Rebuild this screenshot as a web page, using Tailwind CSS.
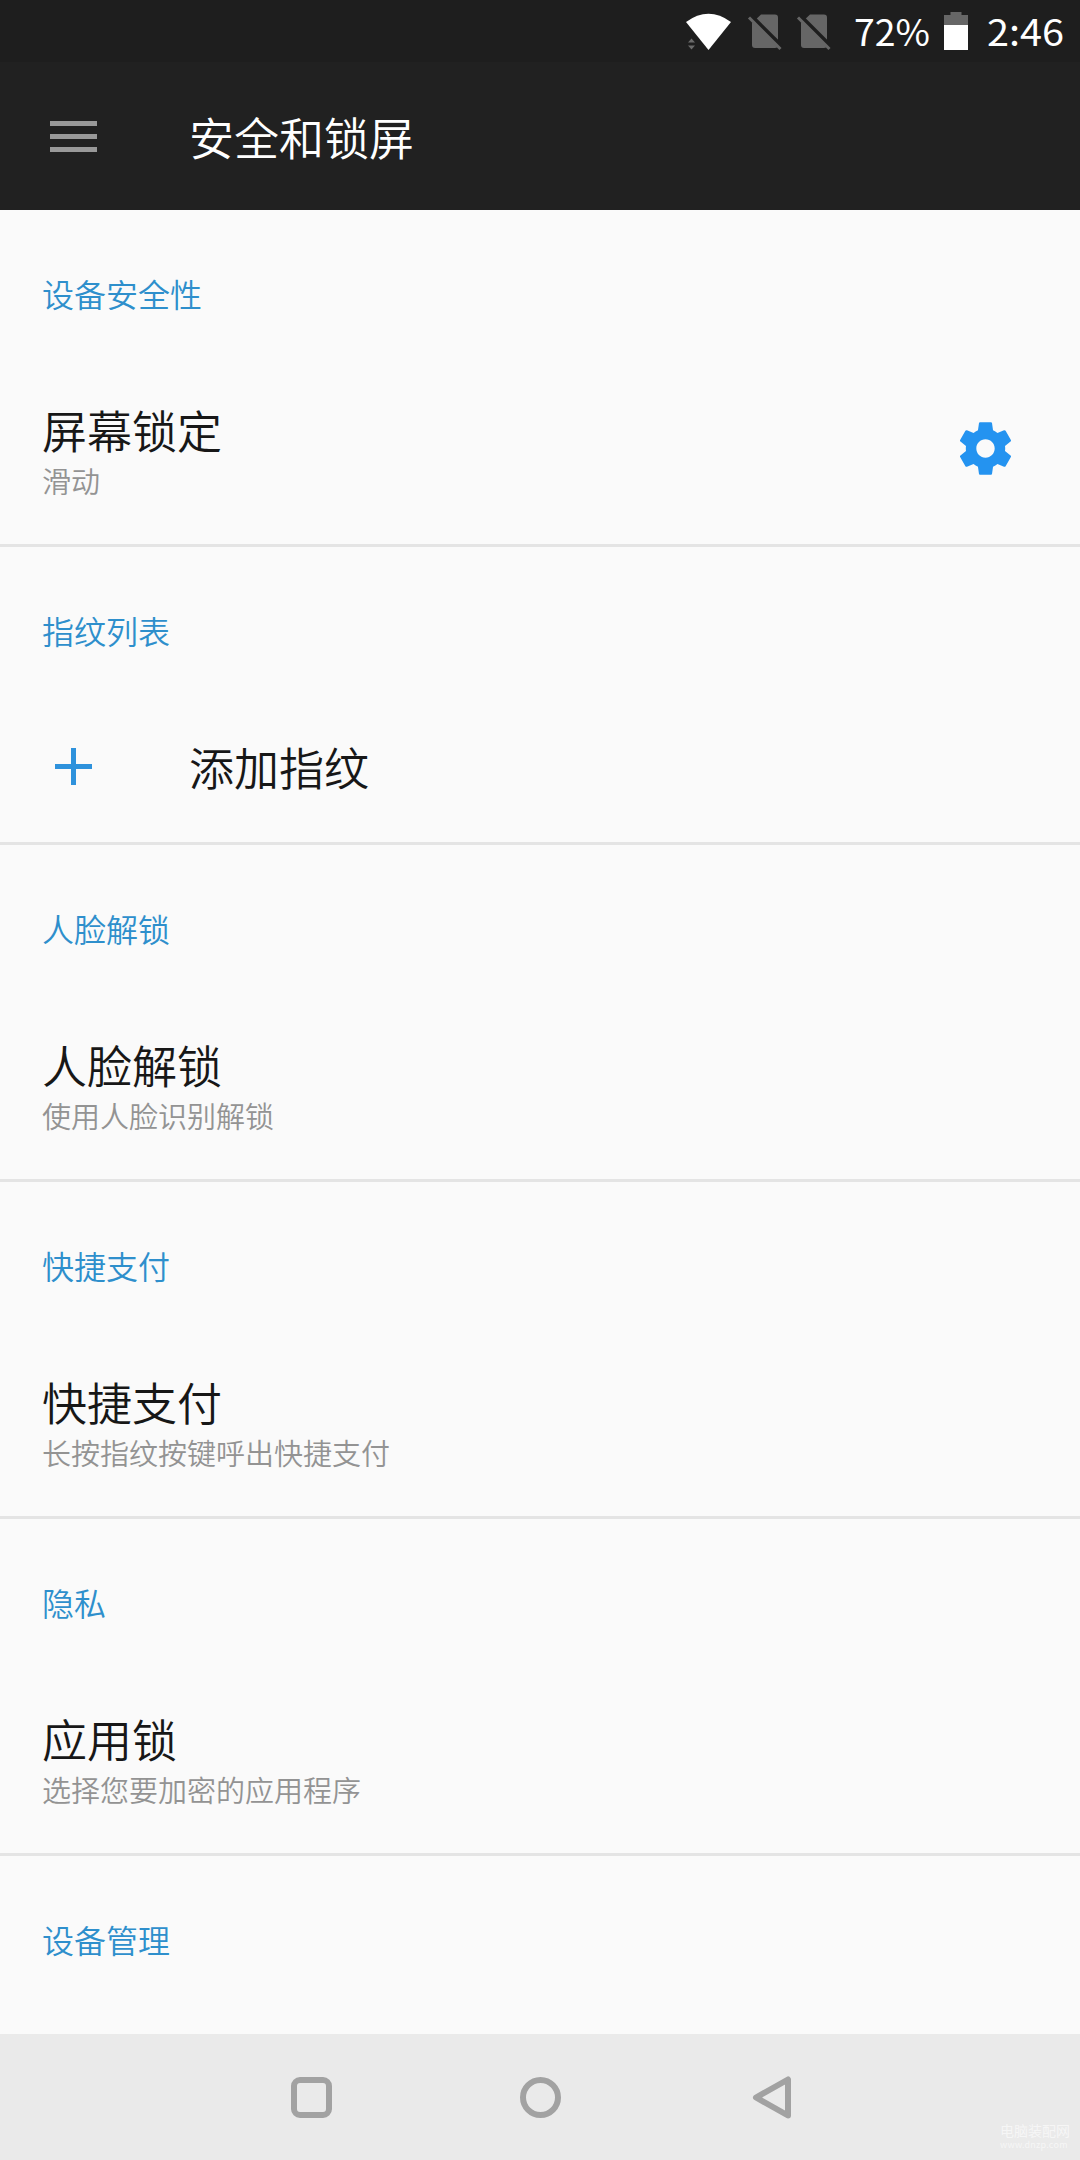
<!DOCTYPE html>
<html lang="zh-CN">
<head>
    <meta charset="UTF-8">
    <meta name="viewport" content="width=device-width, initial-scale=1.0">
    <title>安全和锁屏</title>
    <script src="https://cdn.jsdelivr.net/npm/@tailwindcss/browser@4"></script>
</head>
<body class="bg-[#fafafa] font-['Noto_Sans_CJK_SC',sans-serif] font-[350]">
<div class="w-[1080px] h-[2160px] flex flex-col overflow-hidden">

    <!-- Status bar -->
    <div class="h-[62px] shrink-0 bg-[#1e1e1e] flex items-center text-white font-normal text-[37px]">
        <svg class="w-[410px] h-[62px] ml-[670px] shrink-0" viewBox="670 0 410 62">
            <path d="M686 22Q708.500 5.500 731 22L708.500 50Z" fill="#fff"/>
            <path d="M688 42.500L691.500 38.500L695 42.500ZM688 45.500H695L691.500 49.500Z" fill="#6b6b6b"/>
            <g id="nosim">
                <path d="M752 23L761 14.500H775Q778 14.500 778 17.500V45Q778 48 775 48H755Q752 48 752 45Z" fill="#666"/>
                <path d="M751 15.500L782 46.500" stroke="#1e1e1e" stroke-width="4"/>
                <path d="M749 17.500L780.500 49" stroke="#666" stroke-width="3"/>
            </g>
            <use href="#nosim" x="49"/>
            <path d="M944 25V15H950.500V12H961.500V15H968V25Z" fill="#666"/>
            <path d="M944 25H968V50H944Z" fill="#fff"/>
            <text x="854" y="46" fill="#fff" textLength="76" lengthAdjust="spacingAndGlyphs">72%</text>
            <text x="987" y="46" fill="#fff" textLength="77" lengthAdjust="spacingAndGlyphs">2:46</text>
        </svg>
    </div>

    <!-- App bar -->
    <header class="h-[148px] shrink-0 bg-[#212121] flex items-center">
        <div class="ml-[50px] w-[47px] pt-px flex flex-col gap-2">
            <span class="h-[5px] bg-[#999]"></span>
            <span class="h-[5px] bg-[#999]"></span>
            <span class="h-[5px] bg-[#999]"></span>
        </div>
        <h1 class="ml-[92px] pt-px text-[45px] leading-[60px] font-[350] text-white">安全和锁屏</h1>
    </header>

    <!-- Settings list -->
    <main class="h-[1824px] shrink-0 overflow-hidden text-[#171717]">
        <section class="h-[337px] border-b-3 border-[#e4e4e4] pl-[42px] pt-[58px]">
            <h2 class="text-[32px] leading-[50px] text-[#2e8fcc]">设备安全性</h2>
            <div class="mt-[82px] flex justify-between">
                <div>
                    <p class="text-[45px] leading-[60px]">屏幕锁定</p>
                    <p class="text-[29px] leading-[40px] text-[#939393]">滑动</p>
                </div>
                <svg class="w-[63px] h-[63px] mt-[17px] mr-[63px]" viewBox="0 0 24 24" fill="#2493f0">
                    <path d="M19.430 12.980c.04-.32.070-.64.070-.98s-.03-.66-.07-.98l2.110-1.650c.19-.15.240-.42.120-.64l-2-3.460c-.12-.22-.39-.3-.61-.22l-2.490 1c-.52-.4-1.080-.73-1.690-.98l-.38-2.650C14.460 2.180 14.250 2 14 2h-4c-.25 0-.46.180-.49.420l-.38 2.650c-.61.250-1.170.59-1.690.98l-2.490-1c-.23-.09-.49 0-.61.220l-2 3.460c-.13.220-.07.490.120.640l2.110 1.650c-.04.320-.07.650-.07.980s.03.660.070.980l-2.110 1.650c-.19.150-.24.420-.12.640l2 3.460c.12.220.39.300.61.220l2.490-1c.52.400 1.080.730 1.690.980l.38 2.650c.03.240.24.420.49.420h4c.25 0 .46-.18.490-.42l.38-2.650c.61-.25 1.170-.59 1.690-.98l2.490 1c.23.090.49 0 .61-.22l2-3.460c.12-.22.070-.49-.12-.64l-2.110-1.650zM12 15.500c-1.930 0-3.500-1.570-3.500-3.500s1.570-3.500 3.500-3.500 3.500 1.570 3.500 3.500-1.570 3.500-3.500 3.500z"/>
                </svg>
            </div>
        </section>

        <section class="h-[298px] border-b-3 border-[#e4e4e4] pl-[42px] pt-[58px]">
            <h2 class="text-[32px] leading-[50px] text-[#2e8fcc]">指纹列表</h2>
            <div class="mt-[82px] flex">
                <svg class="ml-[13px] mt-[11px] w-[37px] h-[37px]" viewBox="0 0 37 37" stroke="#2e92dc" stroke-width="5">
                    <path d="M0 18.500H37M18.500 0V37"/>
                </svg>
                <p class="ml-[97px] text-[45px] leading-[60px]">添加指纹</p>
            </div>
        </section>

        <section class="h-[337px] border-b-3 border-[#e4e4e4] pl-[42px] pt-[58px]">
            <h2 class="text-[32px] leading-[50px] text-[#2e8fcc]">人脸解锁</h2>
            <p class="mt-[82px] text-[45px] leading-[60px]">人脸解锁</p>
            <p class="text-[29px] leading-[40px] text-[#939393]">使用人脸识别解锁</p>
        </section>

        <section class="h-[337px] border-b-3 border-[#e4e4e4] pl-[42px] pt-[58px]">
            <h2 class="text-[32px] leading-[50px] text-[#2e8fcc]">快捷支付</h2>
            <p class="mt-[82px] text-[45px] leading-[60px]">快捷支付</p>
            <p class="text-[29px] leading-[40px] text-[#939393]">长按指纹按键呼出快捷支付</p>
        </section>

        <section class="h-[337px] border-b-3 border-[#e4e4e4] pl-[42px] pt-[58px]">
            <h2 class="text-[32px] leading-[50px] text-[#2e8fcc]">隐私</h2>
            <p class="mt-[82px] text-[45px] leading-[60px]">应用锁</p>
            <p class="text-[29px] leading-[40px] text-[#939393]">选择您要加密的应用程序</p>
        </section>

        <section class="pl-[42px] pt-[58px]">
            <h2 class="text-[32px] leading-[50px] text-[#2e8fcc]">设备管理</h2>
        </section>
    </main>

    <!-- Navigation bar -->
    <nav class="relative h-[126px] shrink-0 bg-[#eaeaea] pl-[290px] pt-[42px] flex items-start">
        <svg class="w-[43px] h-[43px]" viewBox="0 0 43 43" fill="none" stroke="#a2a2a2" stroke-width="6">
            <rect x="4" y="4" width="35" height="35" rx="6"/>
        </svg>
        <svg class="ml-[186px] w-[43px] h-[43px]" viewBox="0 0 43 43" fill="none" stroke="#a2a2a2" stroke-width="6">
            <circle cx="21.500" cy="21.500" r="17.500"/>
        </svg>
        <svg class="ml-[190px] w-[43px] h-[43px]" viewBox="0 0 43 43" fill="none" stroke="#a2a2a2" stroke-width="6" stroke-linejoin="round">
            <path d="M36 3.500V39.500L4 21.500Z"/>
        </svg>
        <div class="absolute left-[1000px] top-[87px] text-white/60 font-normal">
            <p class="text-[14px] leading-[18px]">电脑装配网</p>
            <p class="text-[9px] leading-[12px] tracking-wide">www.dnzp.com</p>
        </div>
    </nav>
</div>
</body>
</html>
